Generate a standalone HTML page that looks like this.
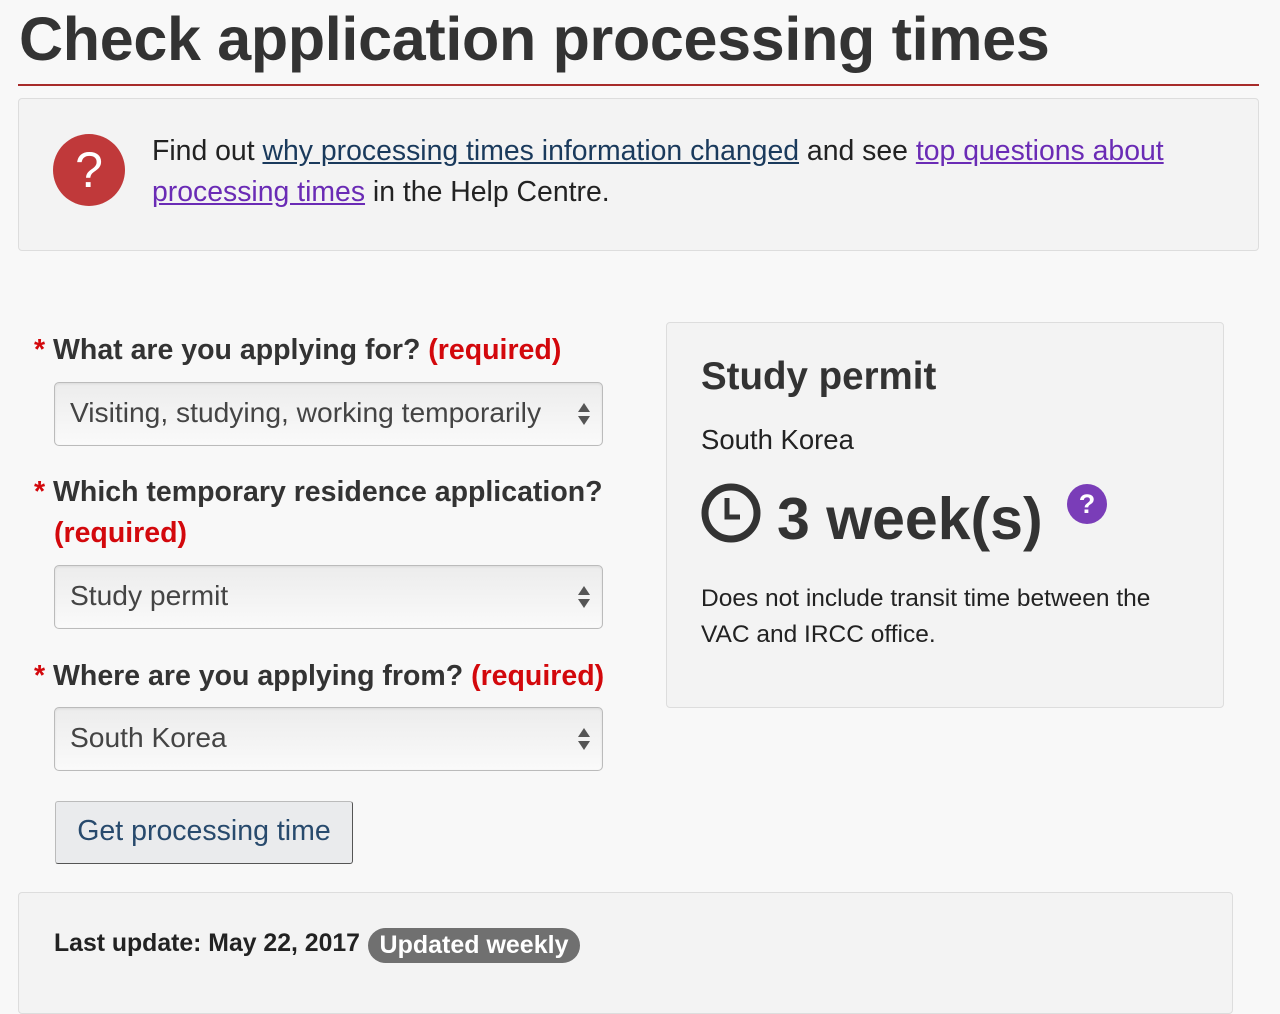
<!DOCTYPE html>
<html><head><style>
body{margin:0;width:1280px;height:988px;overflow:hidden;background:#f8f8f8;font-family:"Liberation Sans",sans-serif;color:#333;position:relative}
.a{position:absolute;white-space:nowrap}
h1{position:absolute;left:19px;top:4px;margin:0;font-size:61px;font-weight:bold;color:#333;letter-spacing:-0.3px}
.box{position:absolute;background:#f3f3f3;border:1px solid #ddd;border-radius:4px}
.lbl{font-size:28.5px;font-weight:bold;color:#333}
.req{color:#d3080c}
.sel{position:absolute;left:54px;width:547px;height:62px;border:1px solid #bbb;border-radius:5px;background:linear-gradient(#ececec,#fafafa);box-shadow:inset 0 1px 2px rgba(0,0,0,.08)}
.sel span{position:absolute;left:15px;top:13px;font-size:28.2px;color:#444}
.sel i{position:absolute;right:12px;top:20px;width:0;height:0;border-left:6px solid transparent;border-right:6px solid transparent;border-bottom:9px solid #555}
.sel b{position:absolute;right:12px;top:33px;width:0;height:0;border-left:6px solid transparent;border-right:6px solid transparent;border-top:9px solid #555}
</style></head><body>
<h1>Check application processing times</h1>
<div class="a" style="left:18px;top:84px;width:1241px;height:2px;background:#a72b2a"></div>
<div class="box" style="left:18px;top:98px;width:1239px;height:151px"></div>
<div class="a" style="left:53px;top:134px;width:72px;height:72px;border-radius:50%;background:#c0393a;color:#fff;font-size:50px;text-align:center;line-height:72px">?</div>
<div class="a" style="left:152px;top:131px;font-size:28.4px;line-height:41px;color:#222">Find out <span style="color:#1a3a5c;text-decoration:underline">why processing times information changed</span> and see <span style="color:#6a2bb5;text-decoration:underline">top questions about</span><br><span style="color:#6a2bb5;text-decoration:underline">processing times</span> in the Help Centre.</div>

<div class="a lbl" style="left:34px;top:334px"><span class="req">*</span> What are you applying for? <span class="req">(required)</span></div>
<div class="sel" style="top:382px"><span>Visiting, studying, working temporarily</span><i></i><b></b></div>
<div class="a lbl" style="left:34px;top:472px;line-height:41px"><span class="req">*</span> Which temporary residence application?<br><span class="req" style="margin-left:20px">(required)</span></div>
<div class="sel" style="top:565px"><span>Study permit</span><i></i><b></b></div>
<div class="a lbl" style="left:34px;top:660px"><span class="req">*</span> Where are you applying from? <span class="req">(required)</span></div>
<div class="sel" style="top:707px"><span>South Korea</span><i></i><b></b></div>
<div class="a" style="left:55px;top:801px;width:296px;height:61px;background:#eaebed;border:1px solid #bbb;border-right-color:#555;border-bottom-color:#555;border-radius:3px;font-size:28.5px;color:#284a6d;line-height:59px;text-align:center">Get processing time</div>

<div class="box" style="left:666px;top:322px;width:556px;height:384px"></div>
<div class="a" style="left:701px;top:355px;font-size:38.5px;font-weight:bold">Study permit</div>
<div class="a" style="left:701px;top:424px;font-size:27.5px;color:#222">South Korea</div>
<svg class="a" style="left:700px;top:482px" width="62" height="62" viewBox="0 0 62 62"><circle cx="31" cy="31" r="26" fill="none" stroke="#333" stroke-width="7"/><path d="M27 16V35H40" fill="none" stroke="#333" stroke-width="5"/></svg>
<div class="a" style="left:777px;top:485px;font-size:59px;font-weight:bold">3 week(s)</div>
<div class="a" style="left:1067px;top:484px;width:40px;height:40px;border-radius:50%;background:#7a3db8;color:#fff;font-size:27px;font-weight:bold;text-align:center;line-height:40px">?</div>
<div class="a" style="left:701px;top:581px;font-size:24.5px;line-height:36px;color:#222">Does not include transit time between the<br>VAC and IRCC office.</div>

<div class="box" style="left:18px;top:892px;width:1213px;height:120px"></div>
<div class="a" style="left:54px;top:930px;font-size:24.8px;font-weight:bold;color:#222">Last update: May 22, 2017</div>
<div class="a" style="left:368px;top:928px;width:212px;height:35px;border-radius:18px;background:#707070;color:#fff;font-size:25px;font-weight:bold;text-align:center;line-height:35px">Updated weekly</div>
</body></html>
